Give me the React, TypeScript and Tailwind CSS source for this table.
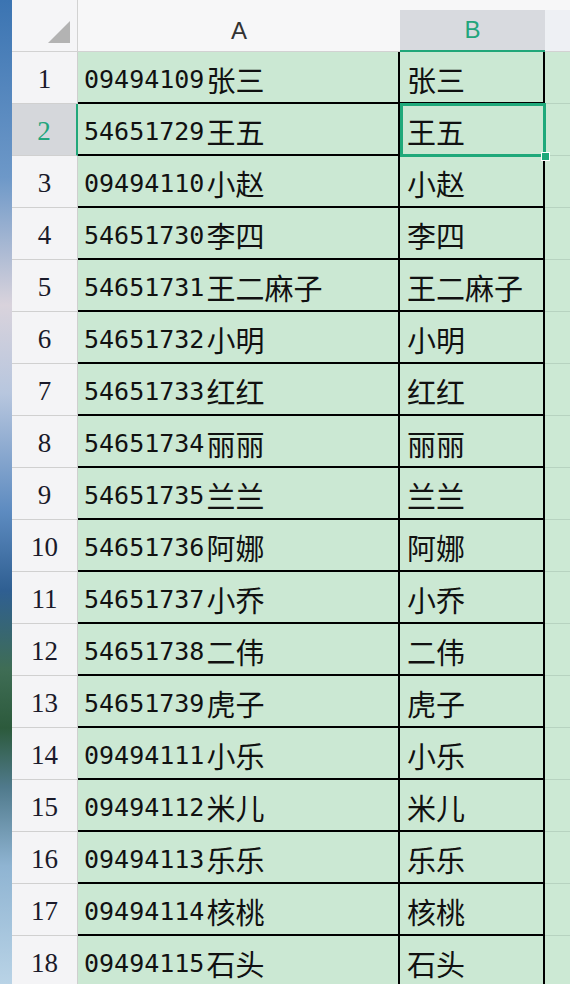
import React from 'react';

interface Row {
  no: number;
  code: string;
  name: string;
}

const rows: Row[] = [
  { no: 1, code: '09494109', name: '张三' },
  { no: 2, code: '54651729', name: '王五' },
  { no: 3, code: '09494110', name: '小赵' },
  { no: 4, code: '54651730', name: '李四' },
  { no: 5, code: '54651731', name: '王二麻子' },
  { no: 6, code: '54651732', name: '小明' },
  { no: 7, code: '54651733', name: '红红' },
  { no: 8, code: '54651734', name: '丽丽' },
  { no: 9, code: '54651735', name: '兰兰' },
  { no: 10, code: '54651736', name: '阿娜' },
  { no: 11, code: '54651737', name: '小乔' },
  { no: 12, code: '54651738', name: '二伟' },
  { no: 13, code: '54651739', name: '虎子' },
  { no: 14, code: '09494111', name: '小乐' },
  { no: 15, code: '09494112', name: '米儿' },
  { no: 16, code: '09494113', name: '乐乐' },
  { no: 17, code: '09494114', name: '核桃' },
  { no: 18, code: '09494115', name: '石头' },
];

const mono = "font-['DejaVu_Sans_Mono',monospace]";
const cjk = "font-['Noto_Sans_CJK_SC',sans-serif]";

export default function App() {
  return (
    <div className="flex h-[984px] w-[570px] overflow-hidden bg-white">
      {/* 桌面背景露出的一条 */}
      <div className="w-[12px] shrink-0 bg-[linear-gradient(180deg,#3b74b2_0%,#6d98c8_18%,#d9d3dc_31%,#b7c6de_40%,#5d8bc0_52%,#2f5f92_60%,#3f6d55_68%,#2c5a3c_74%,#507a8c_80%,#8fb4d2_88%,#b9d3e6_100%)]" />

      <div className="relative flex-1">
        {/* 列标题 */}
        <div className="grid h-[52px] grid-cols-[66px_322px_145px_1fr]">
          <div className="flex items-end justify-end border-r border-b border-[#d2d2d2] bg-[#f5f5f7] pr-[7px] pb-[8px]">
            <svg width="22" height="22" viewBox="0 0 22 22">
              <polygon points="22,0 22,22 0,22" fill="#b3b3b3" />
            </svg>
          </div>
          <div className="flex items-center justify-center border-b border-[#d2d2d2] bg-[#f7f7f8] pt-[10px] font-['Liberation_Sans',sans-serif] text-[24px] text-[#333]">
            A
          </div>
          <div className="flex flex-col bg-[#f7f7f8] pt-[10px]">
            <div className="flex flex-1 items-center justify-center border-b-2 border-[#21a77a] bg-[#d8dadf] font-['Liberation_Sans',sans-serif] text-[24px] text-[#22a57c]">
              B
            </div>
          </div>
          <div className="flex flex-col bg-[#f7f7f8] pt-[10px]">
            <div className="flex-1 border-b border-[#d2d2d2] bg-[#eef0f4]" />
          </div>
        </div>

        {/* 数据行 */}
        {rows.map((r) => {
          const sel = r.no === 2;
          return (
            <div key={r.no} className="grid h-[52px] grid-cols-[66px_322px_145px_1fr]">
              <div
                className={`flex items-center justify-center border-b border-[#d0d0d0] pt-[3px] font-['Liberation_Serif',serif] text-[27px] ${
                  sel
                    ? 'border-r-2 border-r-[#21a77a] bg-[#d5d7db] text-[#22a57c]'
                    : 'border-r border-r-[#cfcfcf] bg-[#f4f4f6] text-[#1a1a2a]'
                }`}
              >
                {r.no}
              </div>
              <div className="flex items-center border-r-2 border-b-2 border-black bg-[#cbe8d3] pt-[5px] pl-[6px] text-[#111]">
                <span className={`${mono} text-[25px]`}>{r.code}</span>
                <span className={`${cjk} ml-[2px] text-[29px] leading-none`}>{r.name}</span>
              </div>
              <div className={`flex items-center border-r-2 border-b-2 border-black bg-[#cbe8d3] pt-[5px] pl-[7px] ${cjk} text-[29px] leading-none text-[#111]`}>
                {r.name}
              </div>
              <div className="border-b border-[#b7d3c0] bg-[#cce9d4]" />
            </div>
          );
        })}

        {/* 选中单元格 B2 */}
        <div className="pointer-events-none absolute top-[103px] left-[388px] h-[54px] w-[146px] border-[3px] border-[#1fa97a]" />
        <div className="pointer-events-none absolute top-[152px] left-[529px] h-[9px] w-[9px] border border-white bg-[#1fa97a]" />
      </div>
    </div>
  );
}
